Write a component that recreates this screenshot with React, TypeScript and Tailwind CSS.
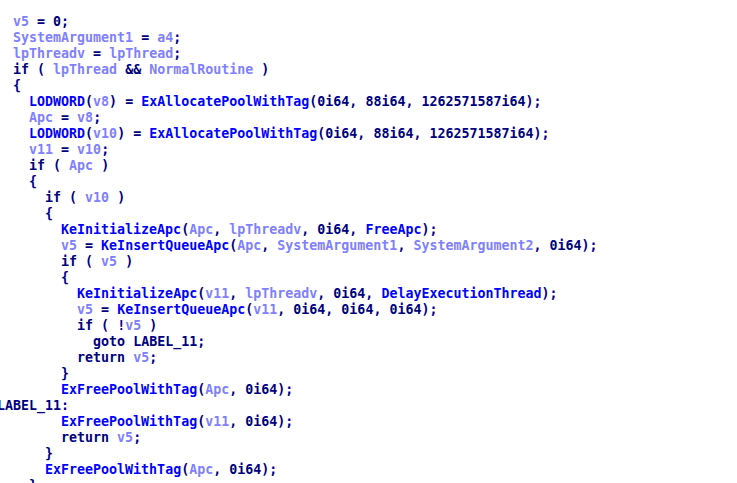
import React from "react";

const VARS = new Set([
  "v5", "SystemArgument1", "a4", "lpThreadv", "lpThread", "NormalRoutine",
  "v8", "Apc", "v10", "v11", "SystemArgument2",
]);
const FUNCS = new Set([
  "LODWORD", "ExAllocatePoolWithTag", "KeInitializeApc", "FreeApc",
  "KeInsertQueueApc", "DelayExecutionThread", "ExFreePoolWithTag",
]);

const LINES = [
  "  v5 = 0;",
  "  SystemArgument1 = a4;",
  "  lpThreadv = lpThread;",
  "  if ( lpThread && NormalRoutine )",
  "  {",
  "    LODWORD(v8) = ExAllocatePoolWithTag(0i64, 88i64, 1262571587i64);",
  "    Apc = v8;",
  "    LODWORD(v10) = ExAllocatePoolWithTag(0i64, 88i64, 1262571587i64);",
  "    v11 = v10;",
  "    if ( Apc )",
  "    {",
  "      if ( v10 )",
  "      {",
  "        KeInitializeApc(Apc, lpThreadv, 0i64, FreeApc);",
  "        v5 = KeInsertQueueApc(Apc, SystemArgument1, SystemArgument2, 0i64);",
  "        if ( v5 )",
  "        {",
  "          KeInitializeApc(v11, lpThreadv, 0i64, DelayExecutionThread);",
  "          v5 = KeInsertQueueApc(v11, 0i64, 0i64, 0i64);",
  "          if ( !v5 )",
  "            goto LABEL_11;",
  "          return v5;",
  "        }",
  "        ExFreePoolWithTag(Apc, 0i64);",
  "LABEL_11:",
  "        ExFreePoolWithTag(v11, 0i64);",
  "        return v5;",
  "      }",
  "      ExFreePoolWithTag(Apc, 0i64);",
  "    }",
];

function tokenize(line: string) {
  const re = /[A-Za-z_][A-Za-z0-9_]*|\d\w*|\s+|./g;
  const out: { t: string; c: string }[] = [];
  let m: RegExpExecArray | null;
  while ((m = re.exec(line))) {
    const t = m[0];
    let c = "text-[#000080]";
    if (VARS.has(t)) c = "text-[#8080ff]";
    else if (FUNCS.has(t)) c = "text-[#0000ff]";
    out.push({ t, c });
  }
  return out;
}

export default function App() {
  return (
    <div className="w-[737px] h-[483px] bg-white overflow-hidden">
      <div
        className="-ml-[3px] pt-[14px] whitespace-pre font-bold text-[13.3px] leading-[16px]"
        style={{ fontFamily: '"DejaVu Sans Mono", monospace' }}
      >
        {LINES.map((line, i) => (
          <div key={i} className="h-[16px]">
            {tokenize(line).map((tok, j) => (
              <span key={j} className={tok.c}>
                {tok.t}
              </span>
            ))}
          </div>
        ))}
      </div>
    </div>
  );
}
